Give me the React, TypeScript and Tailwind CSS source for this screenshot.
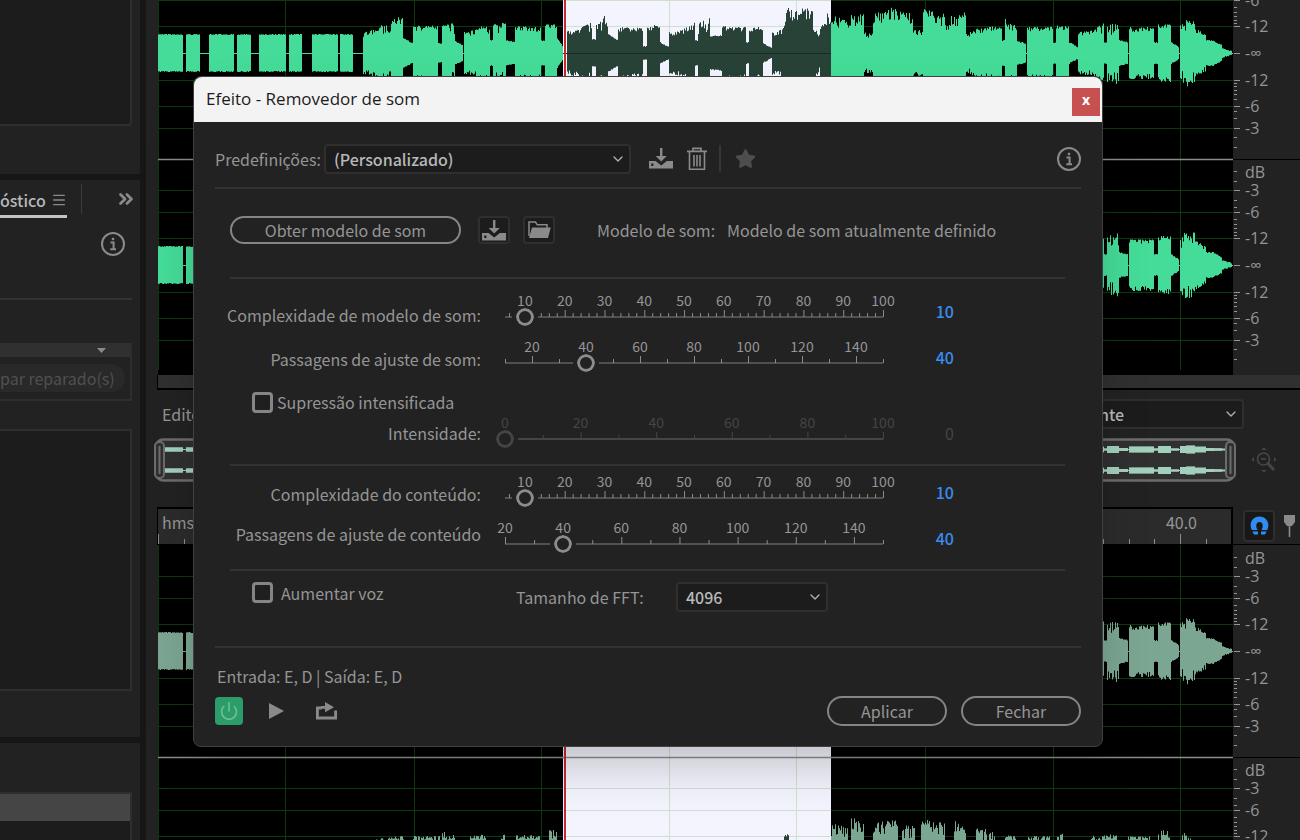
import React from 'react';
import { FaStar } from 'react-icons/fa';
import { ChevronDown, ChevronsRight, Menu, Power } from 'lucide-react';

type Segment = [number, number, number, number];

// start, end, height at start, height at end (from the channel's centre line)
const WAVE: Segment[] = [
    [0, 25, 18, 18], [28, 42, 18, 18], [51, 76, 18, 18], [79, 93, 18, 18],
    [101, 128, 18, 18], [131, 144, 18, 18], [154, 180, 18, 18], [182, 195, 18, 18],
    [205, 219, 20, 23], [219, 229, 24, 31], [229, 233, 22, 22], [233, 245, 37, 34],
    [245, 255, 14, 9], [255, 280, 26, 27], [280, 284, 9, 9], [284, 297, 27, 29],
    [297, 305, 11, 7], [306, 320, 20, 23], [320, 332, 25, 30], [332, 335, 12, 12],
    [335, 348, 28, 31], [348, 357, 12, 10], [357, 383, 26, 25], [383, 387, 12, 12],
    [387, 399, 28, 28], [399, 405, 14, 5],
    [409, 421, 21, 23], [421, 434, 24, 30], [434, 438, 13, 13], [438, 444, 27, 32],
    [444, 450, 38, 33], [450, 460, 18, 12], [460, 485, 25, 24], [485, 489, 6, 6],
    [489, 502, 26, 28], [502, 511, 10, 5], [511, 525, 20, 23], [525, 537, 23, 30],
    [537, 540, 12, 12], [540, 552, 31, 34], [552, 564, 16, 17], [564, 588, 26, 25],
    [588, 591, 10, 10], [591, 605, 25, 25], [605, 614, 9, 4], [614, 625, 21, 23],
    [625, 631, 34, 46], [631, 642, 44, 40], [642, 655, 45, 45], [655, 662, 26, 17],
    [662, 668, 26, 30], [668, 673, 39, 39],
    [673, 690, 36, 34], [690, 693, 27, 27], [693, 706, 37, 38], [706, 715, 20, 18],
    [715, 735, 39, 45], [735, 755, 45, 38], [755, 765, 22, 22], [765, 787, 43, 38],
    [787, 793, 27, 27], [793, 808, 38, 40], [808, 818, 18, 24], [818, 844, 23, 27],
    [844, 847, 12, 12], [847, 859, 36, 28], [859, 868, 11, 9], [869, 895, 25, 26],
    [895, 898, 10, 10], [898, 911, 27, 27], [911, 920, 10, 5], [920, 934, 20, 22],
    [934, 946, 23, 30], [946, 949, 10, 10], [949, 961, 28, 31], [961, 970, 12, 10],
    [971, 996, 25, 25], [996, 1000, 10, 10], [1000, 1013, 28, 28], [1013, 1021, 10, 5],
    [1022, 1028, 28, 33], [1028, 1037, 33, 31], [1037, 1048, 24, 17], [1048, 1056, 12, 12],
    [1056, 1064, 11, 7], [1064, 1074, 4, 1],
];

const QUIET: Segment[] = [
    [218, 246, 23, 27], [255, 282, 26, 26], [284, 290, 32, 32], [290, 297, 27, 27],
    [312, 328, 26, 28], [342, 348, 26, 29], [358, 382, 27, 27], [391, 399, 32, 32],
    [626, 632, 27, 29], [673, 690, 38, 37], [693, 706, 45, 40], [715, 740, 40, 42],
    [744, 757, 37, 36], [763, 787, 43, 39], [796, 808, 41, 41], [818, 837, 37, 29],
    [847, 859, 28, 26], [869, 892, 26, 26], [898, 907, 31, 30], [932, 959, 26, 28],
    [970, 992, 26, 26], [1000, 1012, 31, 33], [1022, 1034, 30, 28],
];

const GRID_X = [0, 127, 256, 383, 511, 638, 767, 895, 1022];
const LEVELS = [27, 53, 75];
const SELECTION = { from: 405, to: 673 };

const noise = (n: number) => Math.abs(Math.sin(n * 12.9898) * 43758.5453) % 1;

const wavePath = (segments: Segment[], centre: number, seed: number) =>
    segments
        .map(([from, to, start, end]) => {
            let top = `M${from} ${centre}`;
            let bottom = '';
            for (let x = from; x < to; x++) {
                const h = start + ((end - start) * (x - from)) / (to - from);
                const rough = h > 28 ? 13 : h > 18 ? 5 : 1;
                const up = h + 1 - Math.pow(noise(x + seed), 1.5) * rough;
                const down = h + 1 - Math.pow(noise(x + seed + 500), 1.5) * rough;
                top += `V${(centre - up).toFixed(1)}H${x + 1}`;
                bottom = `V${(centre + down).toFixed(1)}H${x}` + bottom;
            }
            return `${top}${bottom}Z`;
        })
        .join('');

interface WaveformProps {
    id: string;
    split: number;
    color: string;
    lower: Segment[];
}

const Waveform: React.FC<WaveformProps> = ({ id, split, color, lower }) => {
    const centres = [split - 106, split + 106];
    const lines = centres.flatMap((c) => LEVELS.flatMap((l) => [c - l, c + l]));
    const waves = wavePath(WAVE, centres[0], 3) + wavePath(lower, centres[1], 40);
    const { from, to } = SELECTION;
    return (
        <svg viewBox="0 0 1075 375" preserveAspectRatio="none" className="block h-[375px] w-full min-w-0 flex-1 bg-black">
            <clipPath id={id}>
                <rect x={from} y="0" width={to - from} height="375" />
            </clipPath>
            <g stroke="#0b3a0d" strokeWidth="1">
                {lines.map((y) => <line key={y} x1="0" x2="1075" y1={y + 0.5} y2={y + 0.5} />)}
                {GRID_X.map((x) => <line key={x} x1={x + 0.5} x2={x + 0.5} y1="0" y2="370" />)}
            </g>
            <path d={waves} fill={color} />
            <g stroke={color}>
                {centres.map((y) => <line key={y} x1="0" x2="1075" y1={y + 0.5} y2={y + 0.5} />)}
            </g>
            <g clipPath={`url(#${id})`}>
                <rect x={from} y="0" width={to - from} height="375" fill="#f4f4fe" />
                <g stroke="#cfe0ce">
                    {lines.map((y) => <line key={y} x1="0" x2="1075" y1={y + 0.5} y2={y + 0.5} />)}
                    {GRID_X.map((x) => <line key={x} x1={x + 0.5} x2={x + 0.5} y1="0" y2="375" />)}
                </g>
                <path d={waves} fill="#284238" />
                {centres.map((y) => <line key={y} x1="0" x2="1075" y1={y + 0.5} y2={y + 0.5} stroke="#182b22" />)}
            </g>
            <line x1="0" x2="1075" y1={split + 0.5} y2={split + 0.5} stroke="#8c8c8c" strokeWidth="1.6" />
            <line x1="407" x2="407" y1="0" y2="375" stroke="#c22b31" strokeWidth="2" />
        </svg>
    );
};

const MINOR = [30, 33, 37, 41, 46, 58, 65, 84, 94];

// baseline from the channel's centre, text
const LABELS: [number, string][] = [
    [-87, 'dB'], [-69, '-3'], [-47, '-6'], [-21, '-12'],
    [6, '-∞'], [33, '-12'], [59, '-6'], [81, '-3'],
];

const LevelScale: React.FC<{ split: number; height: number }> = ({ split, height }) => {
    const centres = [split - 106, split + 106];
    return (
        <svg width="67" height="375" className="block shrink-0 bg-[#222222]" fontSize="16" fill="#959595">
            {centres.map((c) => (
                <g key={c}>
                    {[0, ...LEVELS].flatMap((l) => [c - l, c + l]).map((y, i) => (
                        <rect key={i} x="1" y={y} width="6" height="1" />
                    ))}
                    {MINOR.flatMap((l) => [c - l, c + l]).map((y) => (
                        <rect key={y} x="1" y={y} width="3" height="1" />
                    ))}
                    {LABELS.filter(([dy]) => c + dy > 0 && c + dy < height).map(([dy, text]) => (
                        <text key={dy} x="12" y={c + dy}>{text}</text>
                    ))}
                </g>
            ))}
            <rect x="0" y={split} width="67" height="1" fill="#000" />
        </svg>
    );
};

const InfoIcon = () => (
    <svg width="24" height="24" viewBox="0 0 24 24" fill="none" stroke="#8a8a8a" strokeWidth="2">
        <circle cx="12" cy="12" r="11" />
        <path d="M9.5 10.5H12.6V17M9.3 17.2H15" />
        <rect x="10.8" y="5.8" width="2.4" height="2.4" fill="#8a8a8a" stroke="none" />
    </svg>
);

const SaveIcon = () => (
    <svg width="24" height="21" viewBox="0 0 24 21" fill="#8a8a8a">
        <path d="M11 0h2.4v8h4.4l-5.6 5.6L6.6 8H11z" />
        <path d="M0 13h6.6l5.6 4.6 5.6-4.6H24v7.5H0zM2.2 15.4v2.6h2.2v-2.6z" fillRule="evenodd" />
    </svg>
);

const TrashIcon = () => (
    <svg width="20" height="24" viewBox="0 0 20 24" fill="none" stroke="#8a8a8a" strokeWidth="1.6">
        <path d="M0 4.4h20M6 4V1.4h8V4M2.5 5v17.2h15V5M7 8v11.5M10 8v11.5M13 8v11.5" />
    </svg>
);

const FolderIcon = () => (
    <svg width="23" height="18" viewBox="0 0 23 18">
        <path d="M1 15V1h6.5l1.8 2.8H19V7" fill="none" stroke="#8a8a8a" strokeWidth="1.5" />
        <path d="M4 6.6h18.8L20 17H1z" fill="#8a8a8a" />
    </svg>
);

const ExportIcon = () => (
    <svg width="22" height="18" viewBox="0 0 22 18">
        <path d="M5.5 6H1.4v10h18.2V8.5" fill="none" stroke="#8a8a8a" strokeWidth="2.8" />
        <path d="M5 4h4V0l9 5.2-9 5V6.8H5z" fill="#8a8a8a" />
    </svg>
);

const MagnetIcon = () => (
    <svg width="19" height="19" viewBox="0 0 19 19" fill="#2f8cf0">
        <path d="M1.8 14C-2 6 4 .6 9.5 .6S21 6 17.2 14H11.5C14 9.5 12.5 6 9.5 6S5 9.5 7.5 14z" />
        <path d="M2.3 15.5H8V18.5H4zM11 15.5H16.7L15 18.5H11z" />
    </svg>
);

const MarkerIcon = () => (
    <svg width="13" height="22" viewBox="0 0 13 22" fill="#8a8a8a">
        <path d="M1 0h11v7l-3 4H4L1 7z" />
        <rect x="5.7" y="11" width="1.6" height="11" />
    </svg>
);

const ZoomOutIcon = () => (
    <svg width="26" height="26" viewBox="0 0 26 26" fill="none" stroke="#464646" strokeWidth="1.7">
        <circle cx="12.5" cy="12" r="6" />
        <path d="M17 16.5L23 23" strokeWidth="3" />
        <path d="M10 12h5" />
        <path d="M10 3l3-2.5L16 3zM10 23l3 2.5L16 23zM3 10L.5 12.5 3 15zM23 10l2.5 2.5L23 15z" fill="#464646" stroke="none" />
    </svg>
);

interface DropdownProps {
    id: string;
    value: string;
    className: string;
}

const Dropdown: React.FC<DropdownProps> = ({ id, value, className }) => (
    <div className={`relative shrink-0 ${className}`}>
        <select
            id={id}
            className="h-[30px] w-full appearance-none rounded-sm border-2 border-[#2f2f2f] bg-[#1c1c1c] pl-2 text-base leading-6 font-medium text-[#b8b8b8]"
        >
            <option>{value}</option>
        </select>
        <ChevronDown size={16} color="#b0b0b0" className="pointer-events-none absolute top-[7px] right-[5px]" />
    </div>
);

interface ScaleSliderProps {
    id: string;
    min: number;
    value: number;
    max: number;
    major: number;
    minor: number;
    disabled?: boolean;
}

const ScaleSlider: React.FC<ScaleSliderProps> = ({ id, min, max, value, major, minor, disabled }) => {
    const at = (v: number) => ((v - min) / (max - min)) * 100;
    const ticks: number[] = [];
    for (let v = Math.ceil(min / minor) * minor; v <= max; v += minor) ticks.push(v);
    const tone = disabled ? '#454545' : '#8c8c8c';
    return (
        <div className="flex h-[46px] items-start">
            <div className="relative h-8 w-[378px] shrink-0">
                <svg className="absolute inset-x-0 top-4 h-3 w-full overflow-visible">
                    <rect x="0" y="7" width="100%" height="2" fill={disabled ? '#454545' : '#505050'} />
                    {ticks.map((v) => (
                        <rect
                            key={v}
                            x={`${at(v)}%`}
                            y={v % major === 0 ? 1 : 4}
                            width="1"
                            height={v % major === 0 ? 7 : 4}
                            fill={tone}
                        />
                    ))}
                </svg>
                <input
                    id={id}
                    type="range"
                    min={min}
                    max={max}
                    defaultValue={value}
                    disabled={disabled}
                    className={`absolute top-[11px] -left-[13px] h-[26px] w-[404px] appearance-none bg-transparent [&::-webkit-slider-thumb]:size-[26px] [&::-webkit-slider-thumb]:appearance-none [&::-webkit-slider-thumb]:rounded-full [&::-webkit-slider-thumb]:border-4 [&::-webkit-slider-thumb]:border-[#222222] [&::-webkit-slider-thumb]:bg-[#222222] ${disabled ? '[&::-webkit-slider-thumb]:shadow-[inset_0_0_0_3px_#454545]' : '[&::-webkit-slider-thumb]:shadow-[inset_0_0_0_3px_#8c8c8c]'}`}
                />
                {ticks.filter((v) => v % major === 0).map((v) => (
                    <span
                        key={v}
                        style={{ left: `${at(v)}%` }}
                        className={`pointer-events-none absolute -top-px -translate-x-1/2 text-sm leading-4 ${disabled ? 'text-[#454545]' : 'text-[#959595]'}`}
                    >
                        {v}
                    </span>
                ))}
            </div>
            <output htmlFor={id} className={`w-[71px] text-right text-base leading-9 ${disabled ? 'text-[#454545]' : 'font-medium text-[#3a8cf0]'}`}>
                {value}
            </output>
        </div>
    );
};

const CHECKBOX = 'size-[21px] shrink-0 appearance-none rounded-sm border-[3px] border-[#858585] bg-[#1f1f1f]';
const PILL = 'shrink-0 rounded-full border-2 border-[#858585] text-base leading-6 text-[#959595]';
const ICON_BUTTON = 'flex h-7 w-8 shrink-0 items-center justify-center rounded-sm border-2 border-[#2f2f2f] bg-[#1c1c1c]';
const UI_FONT = "font-['Noto_Sans_CJK_JP','Noto_Sans',sans-serif]";

const Sidebar = () => (
    <aside className={`flex w-[140px] shrink-0 flex-col gap-1.5 text-base leading-6 ${UI_FONT}`}>
        <div className="h-[174px] bg-[#222222]">
            <div className="mr-2 h-[126px] rounded-br-sm border-r-2 border-b-2 border-[#2e2e2e] bg-[#1c1c1c]" />
        </div>
        <div className="h-[557px] bg-[#222222]">
            <div className="flex h-[38px] items-center">
                <a href="#diagnostico" className="flex h-full w-[67px] items-center justify-between border-b-[3px] border-[#c4c4c4] pt-1 font-medium text-[#b8b8b8]">
                    óstico
                    <Menu size={16} color="#8a8a8a" />
                </a>
                <div className="ml-3.5 h-[30px] w-px bg-[#3a3a3a]" />
                <button aria-label="Mais" className="ml-[33px]">
                    <ChevronsRight size={22} strokeWidth={3} color="#8a8a8a" />
                </button>
            </div>
            <div className="mt-3.5 flex justify-end pr-[15px]">
                <button aria-label="Informações"><InfoIcon /></button>
            </div>
            <div className="mt-[42px] mr-2 h-0.5 bg-[#333333]" />
            <div className="mt-[43px] mr-2 h-[58px] border-r-2 border-b-2 border-[#2e2e2e]">
                <div className="flex h-3.5 items-center justify-end bg-[#303030] pr-6">
                    <svg width="9" height="5" fill="#8a8a8a"><path d="M0 0h9L4.5 5z" /></svg>
                </div>
                <button disabled className="mt-[7px] h-7 w-[125px] rounded-r-full bg-[#292929] text-left whitespace-nowrap text-[#505050]">
                    par reparado(s)
                </button>
            </div>
            <div className="mt-7 mr-2 h-[262px] border-t-2 border-r-2 border-b-2 border-[#2e2e2e] bg-[#1c1c1c]" />
        </div>
        <div className="flex-1 bg-[#222222] pt-[49px]">
            <div className="mr-2 h-full border-t-2 border-r-2 border-[#2e2e2e] bg-[#1c1c1c]">
                <div className="h-[27px] bg-[#454545]" />
            </div>
        </div>
    </aside>
);

const Overview = () => (
    <svg viewBox="0 0 1082 44" preserveAspectRatio="none" className="block h-11 min-w-0 flex-1">
        <rect x="2" y="1.5" width="1078" height="41" rx="7" fill="#303030" stroke="#6c6c6c" strokeWidth="2.5" />
        {[11, 32].map((y) => (
            <g key={y} fill="#a3d0bc" transform="translate(4 0)">
                <rect x="0" y={y} width="1070" height="1" />
                {WAVE.map(([from, to, start]) => {
                    const h = Math.max(1, start / 8);
                    return <rect key={from} x={from} y={y + 0.5 - h} width={to - from} height={h * 2} />;
                })}
            </g>
        ))}
        {[1, 1072].map((x) => (
            <g key={x} fill="#303030" stroke="#6c6c6c" strokeWidth="2">
                <rect x={x} y="4" width="9" height="36" rx="4" />
                <path d={`M${x + 4.5} 8V36`} />
            </g>
        ))}
    </svg>
);

const Timeline = () => {
    const ticks = Array.from({ length: 43 }, (_, i) => i);
    return (
        <div className="flex h-[38px] border-b border-black">
            <div className="min-w-0 flex-1 border-t-2 border-r-2 border-l border-black bg-[#2b2b2b]">
                <div className="flex h-[25px] items-center justify-between pr-[34px] pl-1 text-base leading-6 text-[#959595]">
                    <span>hms</span>
                    <span>40.0</span>
                </div>
                <svg viewBox="0 0 1073 10" preserveAspectRatio="none" className="block h-2.5 w-full" fill="#8c8c8c">
                    {ticks.map((i) => (
                        <rect key={i} x={Math.round(i * 25.55)} y={i % 5 === 0 ? 0 : 5} width="1" height="10" />
                    ))}
                </svg>
            </div>
            <div className="flex w-[67px] shrink-0 items-center gap-2 pl-2.5">
                <button aria-label="Encaixar" className="flex size-8 shrink-0 items-center justify-center rounded-sm border-2 border-[#2e2e2e] bg-[#181818]">
                    <MagnetIcon />
                </button>
                <button aria-label="Marcador" className="shrink-0"><MarkerIcon /></button>
            </div>
        </div>
    );
};

const Editor = () => (
    <main className="flex min-w-0 flex-1 flex-col overflow-hidden bg-[#222222]">
        <div className="flex pl-3">
            <Waveform id="selection-main" split={159} color="#44dc98" lower={WAVE} />
            <LevelScale split={159} height={375} />
        </div>
        <div className="ml-[11px] h-[15px] border-b-2 border-l border-black bg-[#303030]" />
        <div className={`flex h-12 items-center justify-between pr-14 pl-4 ${UI_FONT}`}>
            <label htmlFor="editor" className="text-base leading-6 text-[#959595]">Editor:</label>
            <Dropdown id="editor" value="nte" className="w-[155px]" />
        </div>
        <div className="flex items-center pl-2">
            <Overview />
            <div className="flex w-16 shrink-0 justify-center pr-2">
                <ZoomOutIcon />
            </div>
        </div>
        <div className={`mt-[25px] pl-[11px] ${UI_FONT}`}>
            <Timeline />
        </div>
        <div className="flex min-h-0 flex-1 overflow-hidden pl-3">
            <Waveform id="selection-preview" split={212} color="#7ba692" lower={QUIET} />
            <LevelScale split={212} height={300} />
        </div>
    </main>
);

const EffectDialog = () => (
    <div
        role="dialog"
        aria-labelledby="dialog-title"
        className={`absolute top-[76px] left-[193px] w-[910px] rounded-lg border border-[#414141] bg-[#222222] text-base whitespace-nowrap text-[#959595] shadow-2xl ${UI_FONT}`}
    >
        <header className="flex h-[45px] items-center justify-between rounded-t-lg bg-[#f3f3f3] pr-0.5 pl-3">
            <h1 id="dialog-title" className="pb-0.5 font-['Open_Sans',sans-serif] text-[17px] leading-6 text-[#1c1c1c]">Efeito - Removedor de som</h1>
            <button aria-label="Fechar janela" className="mt-1 size-7 bg-[#c75050] pb-1 font-['Open_Sans',sans-serif] text-sm leading-6 font-bold text-white">x</button>
        </header>

        <div className="px-[21px]">
            <div className="flex h-[67px] items-center border-b-2 border-[#333333] pt-2">
                <label htmlFor="preset" className="w-[109px] shrink-0 leading-6">Predefinições:</label>
                <Dropdown id="preset" value="(Personalizado)" className="w-[307px]" />
                <button aria-label="Salvar" className="ml-[18px]"><SaveIcon /></button>
                <button aria-label="Excluir" className="ml-3.5"><TrashIcon /></button>
                <div className="ml-3 h-[27px] w-0.5 bg-[#363636]" />
                <button aria-label="Favorito" className="ml-3.5"><FaStar size={21} color="#4d4d4d" /></button>
                <button aria-label="Informações" className="ml-auto"><InfoIcon /></button>
            </div>

            <div className="pr-4 pl-[15px]">
                <div className="flex h-[90px] items-center border-b-2 border-[#333333] pb-1.5 leading-6">
                    <button className={`${PILL} h-7 w-[231px]`}>Obter modelo de som</button>
                    <button aria-label="Salvar modelo" className={`${ICON_BUTTON} ml-[17px]`}><SaveIcon /></button>
                    <button aria-label="Abrir modelo" className={`${ICON_BUTTON} ml-[13px]`}><FolderIcon /></button>
                    <span className="ml-[42px] w-[130px] shrink-0">Modelo de som:</span>
                    <span>Modelo de som atualmente definido</span>
                </div>

                <div className="flex h-[187px] gap-6 border-b-2 border-[#333333]">
                    <div className="-ml-1 w-[255px] shrink-0 pt-3.5 text-right">
                        <label htmlFor="model-complexity" className="block leading-[44px]">Complexidade de modelo de som:</label>
                        <label htmlFor="model-passes" className="block leading-[44px]">Passagens de ajuste de som:</label>
                        <label className="flex h-[42px] items-center gap-1 pl-[26px] leading-6">
                            <input type="checkbox" className={CHECKBOX} />
                            Supressão intensificada
                        </label>
                        <label htmlFor="intensity" className="block leading-5">Intensidade:</label>
                    </div>
                    <div className="pt-3.5">
                        <ScaleSlider id="model-complexity" min={5} max={100} value={10} major={10} minor={2} />
                        <ScaleSlider id="model-passes" min={10} max={150} value={40} major={20} minor={10} />
                        <div className="pt-[30px]">
                            <ScaleSlider id="intensity" min={0} max={100} value={0} major={20} minor={10} disabled />
                        </div>
                    </div>
                </div>

                <div className="flex h-[105px] gap-6 border-b-2 border-[#333333]">
                    <div className="-ml-1 w-[255px] shrink-0 pt-2 text-right">
                        <label htmlFor="content-complexity" className="block leading-10">Complexidade do conteúdo:</label>
                        <label htmlFor="content-passes" className="block leading-10">Passagens de ajuste de conteúdo</label>
                    </div>
                    <div className="pt-2">
                        <ScaleSlider id="content-complexity" min={5} max={100} value={10} major={10} minor={2} />
                        <ScaleSlider id="content-passes" min={20} max={150} value={40} major={20} minor={10} />
                    </div>
                </div>

                <div className="flex h-[75px] items-start pt-[11px] pl-[22px]">
                    <label className="flex w-[264px] items-center gap-2 leading-5">
                        <input type="checkbox" className={CHECKBOX} />
                        Aumentar voz
                    </label>
                    <label htmlFor="fft" className="w-40 leading-[30px]">Tamanho de FFT:</label>
                    <Dropdown id="fft" value="4096" className="w-[152px]" />
                </div>
            </div>

            <footer className="border-t-2 border-[#333333] pt-4 pb-5">
                <p className="pl-0.5 leading-6">Entrada: E, D | Saída: E, D</p>
                <div className="mt-2 flex items-center">
                    <button aria-label="Ligar" className="flex size-7 items-center justify-center rounded-sm bg-[#2a9d68]">
                        <Power size={20} strokeWidth={2} color="#6dbf98" />
                    </button>
                    <button aria-label="Reproduzir" className="ml-[26px]">
                        <svg width="15" height="16" fill="#8a8a8a"><path d="M0 0L15 8 0 16z" /></svg>
                    </button>
                    <button aria-label="Exportar" className="ml-8"><ExportIcon /></button>
                    <button className={`${PILL} ml-auto h-[30px] w-[120px]`}>Aplicar</button>
                    <button className={`${PILL} ml-3.5 h-[30px] w-[120px]`}>Fechar</button>
                </div>
            </footer>
        </div>
    </div>
);

const App = () => (
    <div className="relative flex h-screen gap-1.5 overflow-hidden bg-[#161616] font-['Open_Sans','Noto_Sans',sans-serif]">
        <Sidebar />
        <Editor />
        <EffectDialog />
    </div>
);

export default App;
